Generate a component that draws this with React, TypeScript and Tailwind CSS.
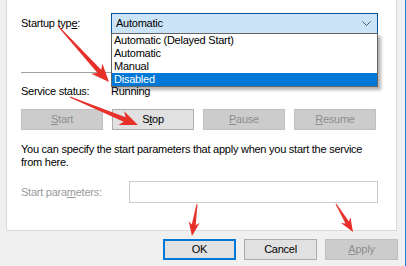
import React from "react";

function arrowPath(x1: number, y1: number, x2: number, y2: number, head = 16, headW = 15, shaftW = 5) {
  const dx = x2 - x1;
  const dy = y2 - y1;
  const len = Math.hypot(dx, dy);
  const ux = dx / len;
  const uy = dy / len;
  const nx = -uy;
  const ny = ux;
  const bx = x2 - ux * head;
  const by = y2 - uy * head;
  const nkx = x2 - ux * head * 0.8;
  const nky = y2 - uy * head * 0.8;
  const p = (x: number, y: number) => `${x.toFixed(1)},${y.toFixed(1)}`;
  return [
    "M",
    p(x1 + nx * 0.5, y1 + ny * 0.5),
    "L",
    p(nkx + (nx * shaftW) / 2, nky + (ny * shaftW) / 2),
    p(bx + (nx * headW) / 2, by + (ny * headW) / 2),
    p(x2, y2),
    p(bx - (nx * headW) / 2, by - (ny * headW) / 2),
    p(nkx - (nx * shaftW) / 2, nky - (ny * shaftW) / 2),
    p(x1 - nx * 0.5, y1 - ny * 0.5),
    "Z",
  ].join(" ");
}

function WinButton({
  children,
  disabled,
  primary,
  className = "",
}: {
  children: React.ReactNode;
  disabled?: boolean;
  primary?: boolean;
  className?: string;
}) {
  const look = disabled
    ? "bg-[#cccccc] border border-[#bfbfbf] text-[#8e8e8e]"
    : primary
    ? "bg-[#e1e1e1] border-2 border-[#0078d7] text-black"
    : "bg-[#e1e1e1] border border-[#adadad] text-black";
  return (
    <div className={`h-[21px] shrink-0 flex items-center justify-center ${look} ${className}`}>
      {children}
    </div>
  );
}

export default function App() {
  const options = ["Automatic (Delayed Start)", "Automatic", "Manual", "Disabled"];
  return (
    <div
      className="relative w-[406px] h-[266px] overflow-hidden bg-[#f0f0f0] text-[11px] leading-[13px] tracking-[-0.25px] text-black"
      style={{ fontFamily: '"Liberation Sans", Arial, sans-serif' }}
    >
      <div className="flex h-full">
        <div className="w-[6px] shrink-0" />
        <div className="w-[391px] shrink-0 flex flex-col">
          <div className="bg-white border-x border-b border-[#d9d9d9] pl-[14px] pr-[18px] pt-[13px] pb-[27px]">
            {/* startup type */}
            <div className="flex items-center h-[21px]">
              <div className="w-[90px]">
                Startup typ<span className="underline">e</span>:
              </div>
              <div className="relative w-[267px] h-[21px]">
                <div className="h-full bg-[#cce4f7] border border-[#005499] flex items-center justify-between pl-[4px] pr-[6px]">
                  <span>Automatic</span>
                  <svg width="9" height="5" viewBox="0 0 9 5">
                    <path d="M0.5 0.5 L4.5 4.5 L8.5 0.5" fill="none" stroke="#555" strokeWidth="1" />
                  </svg>
                </div>
                <div className="absolute left-0 top-[20px] w-[267px] z-10 bg-white border border-[#646464] shadow-[3px_3px_3px_rgba(0,0,0,0.3)]">
                  {options.map((o) => (
                    <div
                      key={o}
                      className={`h-[13px] pl-[2px] ${o === "Disabled" ? "bg-[#0078d7] text-white" : ""}`}
                    >
                      {o}
                    </div>
                  ))}
                </div>
              </div>
            </div>

            <div className="mt-[38px] h-px bg-[#a0a0a0]" />

            {/* status */}
            <div className="flex mt-[12px]">
              <div className="w-[90px]">Service status:</div>
              <div>Running</div>
            </div>

            <div className="flex gap-[9px] mt-[11px]">
              <WinButton disabled className="w-[82px]">
                <span className="underline">S</span>tart
              </WinButton>
              <WinButton className="w-[82px]">
                S<span className="underline">t</span>op
              </WinButton>
              <WinButton disabled className="w-[82px]">
                <span className="underline">P</span>ause
              </WinButton>
              <WinButton disabled className="w-[82px]">
                <span className="underline">R</span>esume
              </WinButton>
            </div>

            <p className="mt-[13px] whitespace-nowrap">
              You can specify the start parameters that apply when you start the service
              <br />
              from here.
            </p>

            <div className="flex items-center mt-[12px]">
              <div className="w-[108px] text-[#9a9a9a]">
                Start para<span className="underline">m</span>eters:
              </div>
              <div className="w-[249px] h-[22px] border border-[#cccccc] bg-white" />
            </div>
          </div>

          <div className="flex justify-end gap-[8px] mt-[8px] mr-[-1px]">
            <WinButton primary className="w-[73px]">
              OK
            </WinButton>
            <WinButton className="w-[73px]">Cancel</WinButton>
            <WinButton disabled className="w-[73px]">
              <span className="underline">A</span>pply
            </WinButton>
          </div>
        </div>
        <div className="flex-1" />
        <div className="w-px bg-[#1883d7]" />
      </div>

      <svg className="absolute inset-0 pointer-events-none z-20" width="406" height="266">
        <path d={arrowPath(58, 26, 109, 82, 18, 15, 5)} fill="#e8302a" />
        <path d={arrowPath(70, 97, 138, 125, 18, 15, 5)} fill="#e8302a" />
        <path d={arrowPath(197, 204, 192, 236, 14, 11, 4)} fill="#e8302a" />
        <path d={arrowPath(336, 204, 353, 232, 14, 11, 4)} fill="#e8302a" />
      </svg>
    </div>
  );
}
